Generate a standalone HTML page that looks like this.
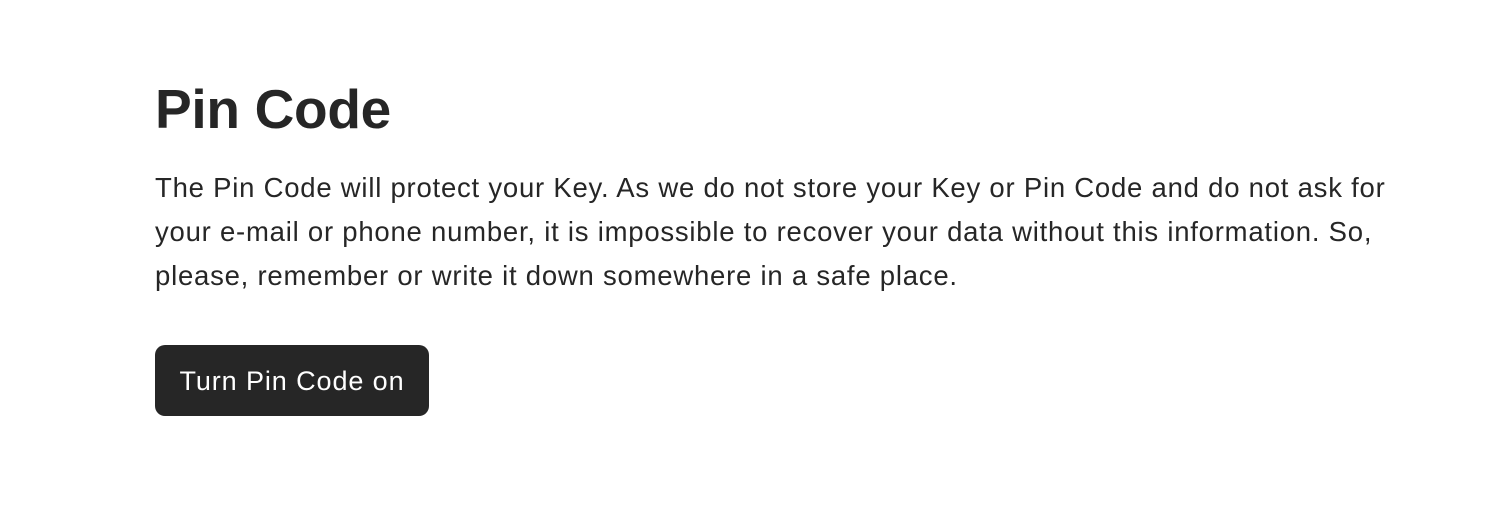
<!DOCTYPE html>
<html><head><meta charset="utf-8"><style>
html,body{margin:0;padding:0;background:#fff;width:1496px;height:520px;overflow:hidden;}
body{font-family:"Liberation Sans",sans-serif;color:#262626;}
h1{position:absolute;left:155px;top:76px;margin:0;font-size:55px;font-weight:bold;line-height:66px;letter-spacing:-0.3px;}
p{position:absolute;left:155px;top:166px;margin:0;width:1320px;font-size:27.5px;line-height:44px;letter-spacing:0.77px;white-space:nowrap;}
.btn{position:absolute;left:155px;top:345px;width:274px;height:71px;background:#262626;color:#fff;border-radius:10px;font-size:27px;line-height:72px;text-align:center;letter-spacing:0.9px;}
</style></head><body>
<h1>Pin Code</h1>
<p>The Pin Code will protect your Key. As we do not store your Key or Pin Code and do not ask for<br>your e-mail or phone number, it is impossible to recover your data without this information. So,<br>please, remember or write it down somewhere in a safe place.</p>
<div class="btn">Turn Pin Code on</div>
</body></html>
